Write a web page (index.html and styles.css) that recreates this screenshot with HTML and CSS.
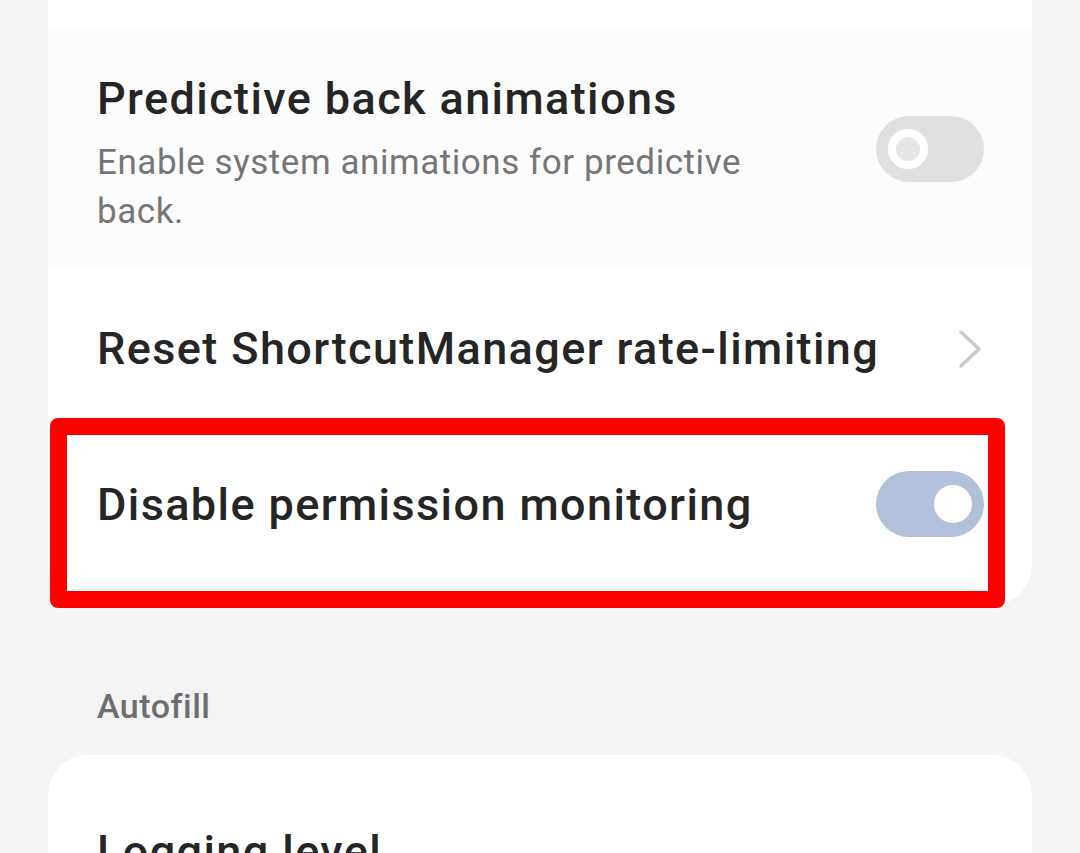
FILE: index.html
```html
<!DOCTYPE html>
<html lang="en">
<head>
<meta charset="utf-8">
<title>Developer options</title>
<link rel="stylesheet" href="styles.css">
</head>
<body>
<div class="screen">
  <section class="card card-top">
    <div class="row row-pressed">
      <div class="row-text row-text-shift">
        <div class="title">Predictive back animations</div>
        <div class="summary">Enable system animations for predictive back.</div>
      </div>
      <div class="switch switch-off"><span class="thumb"></span></div>
    </div>
    <div class="row row-link">
      <div class="row-text">
        <div class="title">Reset ShortcutManager rate-limiting</div>
      </div>
      <svg class="chevron" width="26" height="40" viewBox="0 0 26 40"><path d="M3 3 L21 20 L3 37" fill="none" stroke="#c9c9c9" stroke-width="3.5" stroke-linecap="round" stroke-linejoin="round"/></svg>
    </div>
    <div class="row row-highlight">
      <div class="row-text">
        <div class="title">Disable permission monitoring</div>
      </div>
      <div class="switch switch-on"><span class="thumb"></span></div>
      <div class="highlight"></div>
    </div>
  </section>
  <div class="section-label">Autofill</div>
  <section class="card card-bottom">
    <div class="row">
      <div class="row-text">
        <div class="title">Logging level</div>
      </div>
    </div>
  </section>
</div>
</body>
</html>
```
FILE: styles.css
```css
html, body {
  margin: 0;
  padding: 0;
  background: #f4f4f4;
  width: 1080px;
  height: 853px;
  overflow: hidden;
}
.screen {
  padding: 0 48px;
  font-family: Roboto, "Noto Sans", sans-serif;
}
.card {
  background: #ffffff;
  border-radius: 40px;
}
.card-top {
  margin-top: -40px;
  padding-top: 40px;
  padding-bottom: 25px;
  border-top-left-radius: 0;
  border-top-right-radius: 0;
}
.row {
  position: relative;
  display: flex;
  align-items: center;
  padding: 0 48px 0 49px;
}
.row-pressed {
  margin-top: 28px;
  height: 241px;
  background: #fcfcfc;
}
.row-link {
  height: 159px;
}
.row-highlight {
  height: 152px;
}
.row-text {
  flex: 1;
  min-width: 0;
}
.row-text-shift {
  margin-top: 11px;
}
.title {
  font-size: 45px;
  font-weight: 500;
  letter-spacing: 1.4px;
  color: #252525;
  line-height: 53px;
  white-space: nowrap;
}
.summary {
  margin-top: 13px;
  font-size: 35px;
  letter-spacing: 0.55px;
  line-height: 49px;
  color: #767676;
  width: 680px;
}
.switch {
  position: relative;
  width: 108px;
  height: 66px;
  border-radius: 33px;
  flex: none;
}
.switch-off {
  background: #e0e0e0;
}
.switch-off .thumb {
  position: absolute;
  left: 12px;
  top: 13px;
  width: 24px;
  height: 24px;
  border-radius: 50%;
  border: 8px solid #ffffff;
  background: #e6e6e6;
}
.switch-on {
  background: #b3c0d9;
}
.switch-on .thumb {
  position: absolute;
  right: 12px;
  top: 14px;
  width: 38px;
  height: 38px;
  border-radius: 50%;
  background: #ffffff;
}
.chevron {
  flex: none;
}
.highlight {
  position: absolute;
  left: 2px;
  top: -10px;
  right: 27px;
  bottom: -28px;
  border: 17px solid #ff0000;
  border-radius: 8px;
  pointer-events: none;
}
.section-label {
  padding: 0 49px;
  margin-top: 81px;
  font-size: 34px;
  font-weight: 500;
  letter-spacing: 0.5px;
  color: #6e6e6e;
  line-height: 40px;
}
.card-bottom {
  margin-top: 29px;
  padding-top: 70px;
  height: 300px;
}
```
